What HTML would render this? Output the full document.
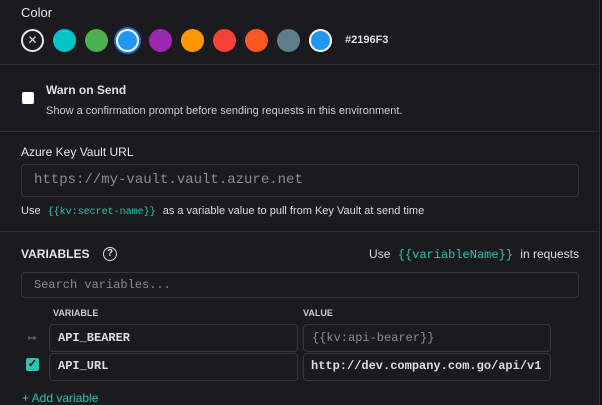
<!DOCTYPE html>
<html><head><style>
*{margin:0;padding:0;box-sizing:border-box}
body{width:602px;height:405px;background:#1b1b1f;position:relative;overflow:hidden;font-family:"Liberation Sans",sans-serif;color:#e6e6e6}
.a{position:absolute}
.hl{position:absolute;left:0;width:599px;height:1px;background:#2e2e33}
.sw{position:absolute;top:29px;width:23px;height:23px;border-radius:50%}
.box{position:absolute;border:1px solid #36363c;border-radius:4px;background:#1b1b1f}
.mono{font-family:"Liberation Mono",monospace}
.t{color:#2bc4b0}
</style></head><body>
<div class="a" style="left:599px;top:0;width:3px;height:405px;background:#111114;border-left:1px solid #333"></div>
<div class="a" style="left:21px;top:5px;font-size:13px">Color</div>
<div class="sw" style="left:21px;border:2px solid #e8e8e8;color:#ddd;font-size:12px;text-align:center;line-height:19px">✕</div>
<div class="sw" style="left:53px;background:#00c4c8"></div>
<div class="sw" style="left:85px;background:#4caf50"></div>
<div class="sw" style="left:116px;background:#2196f3;border:2px solid #fff;box-shadow:0 0 0 2px #1e6fd0"></div>
<div class="sw" style="left:149px;background:#9c27b0"></div>
<div class="sw" style="left:181px;background:#ff9800"></div>
<div class="sw" style="left:213px;background:#f44336"></div>
<div class="sw" style="left:245px;background:#ff5722"></div>
<div class="sw" style="left:277px;background:#607d8b"></div>
<div class="sw" style="left:309px;background:#2196f3;border:2px solid #fff"></div>
<div class="a" style="left:345px;top:34px;font-size:11px;font-weight:bold;color:#ddd">#2196F3</div>
<div class="hl" style="top:64px"></div>
<div class="a" style="left:22px;top:92px;width:12px;height:12px;background:#fff;border-radius:2px"></div>
<div class="a" style="left:46px;top:83px;font-size:12px;font-weight:bold;color:#e0e0e0">Warn on Send</div>
<div class="a" style="left:46px;top:105px;font-size:11px;color:#ccc">Show a confirmation prompt before sending requests in this environment.</div>
<div class="hl" style="top:131px"></div>
<div class="a" style="left:21px;top:145px;font-size:12px">Azure Key Vault URL</div>
<div class="box" style="left:21px;top:164px;width:558px;height:33px"></div>
<div class="a mono" style="left:34px;top:172px;font-size:14px;color:#8a8a90">https://my-vault.vault.azure.net</div>
<div class="a" style="left:21px;top:205px;font-size:11px;color:#ddd">Use <span class="mono t" style="margin:0 4px;font-size:10px">{{kv:secret-name}}</span> as a variable value to pull from Key Vault at send time</div>
<div class="hl" style="top:231px"></div>
<div class="a" style="left:21px;top:247px;font-size:12px;font-weight:bold">VARIABLES</div>
<div class="a" style="left:103px;top:247px;width:14px;height:14px;border:1.5px solid #ddd;border-radius:50%;font-size:10px;text-align:center;line-height:12px;font-weight:bold">?</div>
<div class="a" style="right:23px;top:247px;font-size:12px;color:#ddd">Use <span class="mono t" style="margin:0 4px">{{variableName}}</span> in requests</div>
<div class="box" style="left:21px;top:272px;width:558px;height:26px"></div>
<div class="a mono" style="left:34px;top:278px;font-size:12px;color:#8a8a90">Search variables...</div>
<div class="a" style="left:53px;top:308px;font-size:9px;font-weight:bold;color:#ccc">VARIABLE</div>
<div class="a" style="left:303px;top:308px;font-size:9px;font-weight:bold;color:#ccc">VALUE</div>
<div class="a" style="left:28px;top:333px;font-size:10px;color:#777">↦</div>
<div class="box" style="left:49px;top:324px;width:249px;height:28px"></div>
<div class="a mono" style="left:58px;top:331px;font-size:12px;font-weight:bold;color:#ddd">API_BEARER</div>
<div class="box" style="left:303px;top:324px;width:248px;height:28px"></div>
<div class="a mono" style="left:312px;top:331px;font-size:12px;color:#8a8a90">{{kv:api-bearer}}</div>
<div class="a" style="left:26px;top:358px;width:13px;height:13px;background:#2bc4b0;border-radius:2px;color:#111;font-size:11px;text-align:center;line-height:13px;font-weight:bold">✓</div>
<div class="box" style="left:49px;top:353px;width:249px;height:28px"></div>
<div class="a mono" style="left:58px;top:359px;font-size:12px;font-weight:bold;color:#ddd">API_URL</div>
<div class="box" style="left:303px;top:353px;width:248px;height:28px"></div>
<div class="a mono" style="left:311px;top:359px;font-size:12px;font-weight:bold;color:#ddd;white-space:nowrap">http://dev.company.com.go/api/v1</div>
<div class="a t" style="left:22px;top:391px;font-size:12px">+ Add variable</div>
</body></html>
